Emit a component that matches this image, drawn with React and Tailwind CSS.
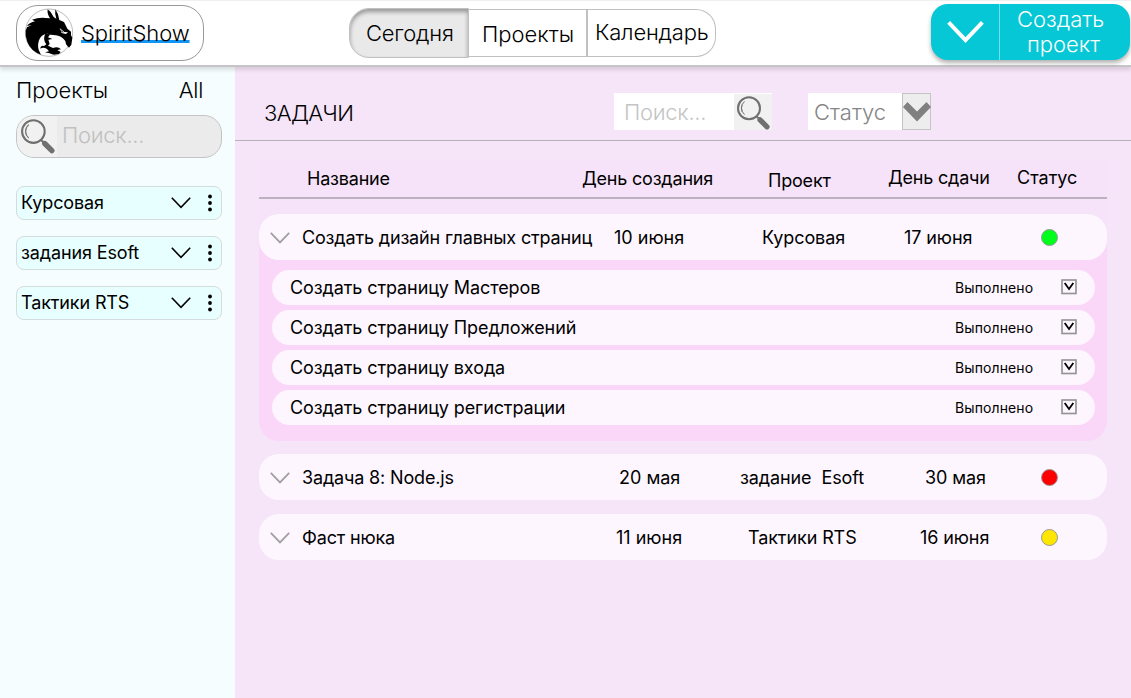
import React from "react";

function Chevron({ className, stroke = 2 }) {
  return (
    <svg viewBox="0 0 20 12" className={className} fill="none" stroke="currentColor" strokeWidth={stroke}>
      <path d="M0.8 0.8 L10 10.4 L19.2 0.8" />
    </svg>
  );
}

function Magnifier({ className }) {
  return (
    <svg viewBox="0 0 36 36" className={className} fill="none" stroke="#707070">
      <circle cx="14" cy="13.2" r="11" strokeWidth="2" />
      <path d="M9.5 19.5 A8.5 8.5 0 0 1 9.5 6.5" strokeWidth="1" />
      <path d="M7.2 17 A8.5 8.5 0 0 1 7.2 9.5" strokeWidth="0.7" />
      <path d="M21.5 21.5 L24.5 24" strokeWidth="2" />
      <path d="M25 24.8 L32 31.8" strokeWidth="5.2" strokeLinecap="round" />
    </svg>
  );
}

function Logo() {
  return (
    <svg viewBox="19 17 150 153" className="mb-[2px] h-[51px] w-[50px] shrink-0">
      <circle cx="94" cy="94" r="71" fill="#fff" stroke="#999" strokeWidth="2" />
      <path
        fill="#000"
        d="M24 88 L28 78 L42 71 L28 74 Q36 63 52 60 L43 55 Q62 48 84 50 L97 51 Q88 38 90 24 Q101 31 108 47 L116 52 Q111 38 113 24 Q122 36 125 56 L139 62 L145 74 L149 82 L160 91 L160 102 L164 109 L161 130 L154 139 L145 129 L143 119 Q130 103 114 102 Q97 100 89 97 Q73 99 66 112 Q58 128 63 146 L70 160 Q40 150 29 122 Q22 104 24 88Z"
      />
      <path
        fill="#000"
        d="M83 97 L98 99 L91 108 L104 113 L92 115 L96 128 L91 133 L106 140 Q121 134 130 144 L119 146 L129 152 L124 158 L108 160 Q96 155 82 153 L94 150 L88 143 Q77 136 68 142 Q69 131 79 134 L86 129 Q74 113 83 97Z"
      />
      <path fill="#fff" d="M126 80 L140 92 L151 93 L145 98 L132 95Z" />
      <path d="M128 87 L137 93" stroke="#000" strokeWidth="2.5" />
    </svg>
  );
}

function TopBar() {
  return (
    <header className="relative z-10 flex h-[67px] items-start border-t border-b-2 border-t-[#f0f0f0] border-b-[#c6c4c8] bg-white shadow-[0_3px_4px_rgba(0,0,0,0.12)]">
      <div className="mt-[4px] ml-[16px] flex h-[56px] w-[188px] shrink-0 items-center rounded-[22px] border border-[#999] pl-[7px]">
        <Logo />
        <span className="ml-[7px] text-[22px] leading-[28px] tracking-[-0.1px] underline decoration-[#1296f5] decoration-[3px] underline-offset-[-1px] [text-decoration-skip-ink:none]">SpiritShow</span>
      </div>
      <nav className="mt-[7px] ml-[145px] flex shrink-0 items-center text-[22px] leading-[28px]">
        <button className="h-[50px] w-[120px] rounded-l-[20px] border border-[#c0c0c0] bg-[#e9e9e9] pl-[16px] text-left tracking-[-0.2px] shadow-[inset_0_3px_4px_rgba(0,0,0,0.35)]">Сегодня</button>
        <button className="h-[48px] w-[117px] border-y border-[#c0c0c0] pt-[2px] pl-[13px] text-left">Проекты</button>
        <button className="h-[48px] w-[130px] rounded-r-[20px] border border-l-2 border-[#c0c0c0] pb-[2px] pl-[7px] text-left tracking-[-0.2px]">Календарь</button>
      </nav>
      <div className="mt-[3px] ml-[215px] flex h-[56px] w-[199px] shrink-0 rounded-[17px] bg-[#05c7d5] text-white shadow-[0_3px_4px_rgba(0,0,0,0.3)]">
        <div className="flex w-[69px] items-center justify-center border-r border-[#6de0e8]">
          <Chevron className="h-[22px] w-[37px]" stroke={2.2} />
        </div>
        <button className="flex flex-1 flex-col pl-[17px] pt-[3px] text-left text-[22px] leading-[25px] font-light">
          <span>Создать</span>
          <span className="pl-[10px]">проект</span>
        </button>
      </div>
    </header>
  );
}

const projects = ["Курсовая", "задания Esoft", "Тактики RTS"];

function Sidebar() {
  return (
    <aside className="w-[235px] shrink-0 bg-[#f5fdff] pl-[16px]">
      <div className="flex w-[187px] justify-between pt-[9px] text-[22px] leading-[28px]">
        <h2>Проекты</h2>
        <span className="tracking-[-0.3px]">All</span>
      </div>
      <div className="mt-[11px] flex h-[43px] w-[206px] items-center overflow-hidden rounded-[18px] border border-[#c4c4c4] bg-[#ebebeb]">
        <div className="h-full w-[40px] bg-[#f1f1f1]">
          <Magnifier className="mt-[2px] ml-[2px] h-[37px] w-[37px]" />
        </div>
        <span className="ml-[5px] pb-[4px] text-[22px] leading-[28px] font-light tracking-[-0.3px] text-[#c0c0c0]">Поиск...</span>
      </div>
      <ul className="mt-[28px] flex flex-col gap-[16px]">
        {projects.map((name) => (
          <li key={name} className="flex h-[34px] w-[206px] items-center rounded-[8px] border border-[#d4dcdd] bg-[#e8ffff] pl-[4px] text-[18px] font-normal tracking-[-0.13px]">
            <span className="w-[150px] pb-px">{name}</span>
            <Chevron className="h-[12px] w-[20px]" stroke={1.6} />
            <svg viewBox="0 0 4 18" className="ml-[17px] h-[18px] w-[4px]">
              <circle cx="2" cy="2.5" r="1.9" />
              <circle cx="2" cy="9" r="1.9" />
              <circle cx="2" cy="15.5" r="1.9" />
            </svg>
          </li>
        ))}
      </ul>
    </aside>
  );
}

function Toolbar() {
  return (
    <div className="flex h-[74px] items-start border-b border-[#b7b0b9]">
      <h1 className="mt-[32px] w-[349px] shrink-0 text-[22px] leading-[28px] tracking-[-0.6px]">
        <span className="ml-[29px]">ЗАДАЧИ</span>
      </h1>
      <div className="mt-[26px] ml-[30px] flex h-[37px] w-[158px] shrink-0 items-center bg-white pl-[10px] text-[22px] font-light tracking-[-0.3px] text-[#c4c4c4]">
        <span className="w-[110px] pt-px">Поиск...</span>
        <div className="mt-[1px] h-[36px] w-[38px] bg-[#f1f1f1]">
          <Magnifier className="mt-px ml-[1px] h-[36px] w-[36px]" />
        </div>
      </div>
      <div className="mt-[26px] ml-[36px] flex h-[37px] shrink-0 bg-white text-[22px] text-[#858585]">
        <span className="w-[94px] pl-[6px] leading-[38px]">Статус</span>
        <div className="flex w-[29px] items-center justify-center border border-[#c4c4c4] bg-[#ededed]">
          <svg viewBox="0 0 28 20" className="h-[20px] w-[28px] shrink-0">
            <path d="M4.5 0 L14 9.5 L23.5 0 L28 5 L14 19.5 L0 5Z" fill="#808080" />
          </svg>
        </div>
      </div>
    </div>
  );
}

const cols = "grid grid-cols-[43px_269px_155px_150px_135px_96px]";

function TaskRow({ name, created, project, due, color }) {
  return (
    <div className={`${cols} h-[46px] items-center rounded-[20px] bg-[#fdf6ff]`}>
      <Chevron className="mt-px ml-[11px] h-[12px] w-[20px] text-[#a0a0a0]" stroke={1.8} />
      <span className="pt-[2px] tracking-[-0.16px] whitespace-nowrap">{name}</span>
      <span className={`pt-[2px] ${created[1]}`}>{created[0]}</span>
      <span className={`pt-[2px] tracking-[-0.1px] whitespace-pre ${project[1]}`}>{project[0]}</span>
      <span className={`pt-px tracking-[-0.1px] ${due[1]}`}>{due[0]}</span>
      <span className={`ml-[30px] h-[17px] w-[17px] rounded-full border border-[#999] ${color}`} />
    </div>
  );
}

const subtasks = [
  "Создать страницу Мастеров",
  "Создать страницу Предложений",
  "Создать страницу входа",
  "Создать страницу регистрации",
];

function Subtask({ name }) {
  return (
    <li className="flex h-[35px] items-center rounded-[18px] bg-[#fdf6ff] pl-[18px]">
      <span className="w-[665px] pt-px tracking-[-0.1px]">{name}</span>
      <span className="w-[106px] pt-px text-[14px] tracking-[0.1px]">Выполнено</span>
      <svg viewBox="0 0 16 16" className="mb-[2px] h-[16px] w-[16px]" fill="none">
        <rect x="1" y="1" width="14" height="13.5" stroke="#929292" strokeWidth="1.6" />
        <path d="M3.7 4 L8 10 L12.3 4" stroke="#000" strokeWidth="1.8" />
      </svg>
    </li>
  );
}

function TaskTable() {
  return (
    <section className="mt-[19px] ml-[24px] w-[848px] text-[18px] leading-[24px] font-normal">
      <div className="bg-[#f6e3f9]">
        <div className={`${cols} h-[39px] border-b-2 border-[#bcb1bf] tracking-[-0.2px]`}>
          <span />
          <span className="pt-[7px] pl-[5px]">Название</span>
          <span className="pt-[7px] pl-[11px] whitespace-nowrap">День создания</span>
          <span className="pt-[9px] pl-[42px]">Проект</span>
          <span className="pt-[6px] pl-[12px] whitespace-nowrap">День сдачи</span>
          <span className="pt-[6px] pl-[6px] tracking-normal">Статус</span>
        </div>
        <div className="h-[15px]" />
      </div>
      <div className="h-[227px] rounded-b-[20px] bg-[linear-gradient(#f6e3f9_20px,#fad7f9_20px)]">
        <TaskRow
          name="Создать дизайн главных страниц"
          created={["10 июня", "pl-[43px]"]}
          project={["Курсовая", "pl-[36px]"]}
          due={["17 июня", "pl-[28px]"]}
          color="bg-[#00ff1a]"
        />
        <ul className="mt-[10px] mr-[12px] ml-[13px] flex flex-col gap-[5px]">
          {subtasks.map((name) => (
            <Subtask key={name} name={name} />
          ))}
        </ul>
      </div>
      <div className="mt-[13px] flex flex-col gap-[14px]">
        <TaskRow
          name="Задача 8: Node.js"
          created={["20 мая", "pl-[48px]"]}
          project={["задание  Esoft", "pl-[14px]"]}
          due={["30 мая", "pl-[49px]"]}
          color="bg-[#ff0000]"
        />
        <TaskRow
          name="Фаст нюка"
          created={["11 июня", "pl-[45px]"]}
          project={["Тактики RTS", "pl-[22px]"]}
          due={["16 июня", "pl-[44px]"]}
          color="bg-[#ffe600]"
        />
      </div>
    </section>
  );
}

export default function App() {
  return (
    <div className="flex h-screen w-full flex-col overflow-hidden bg-[#f6e5f8] font-['Inter',sans-serif] font-[350] text-black">
      <TopBar />
      <div className="flex flex-1">
        <Sidebar />
        <main className="flex-1">
          <Toolbar />
          <TaskTable />
        </main>
      </div>
    </div>
  );
}
